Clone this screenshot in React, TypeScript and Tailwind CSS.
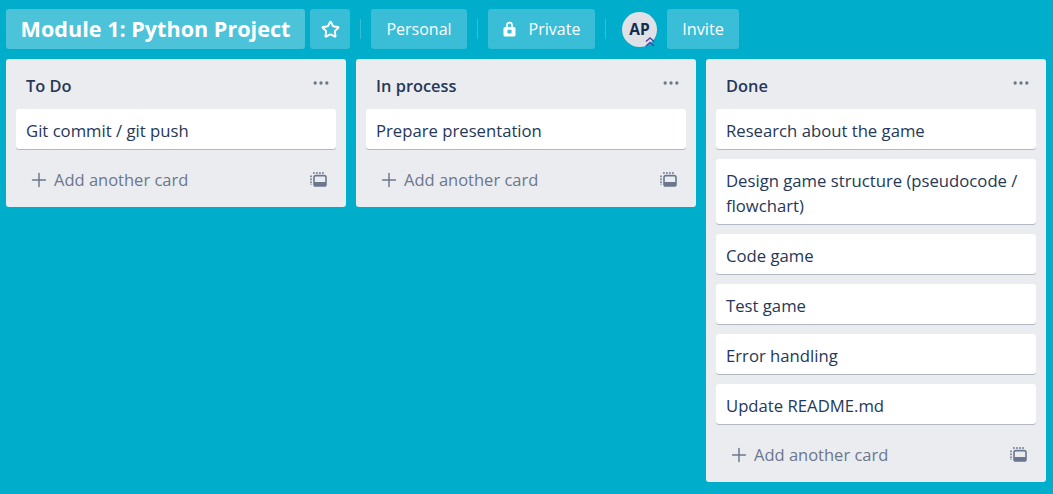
import { MoreHorizontal, Plus, Star } from 'lucide-react';

const lists = [
  { title: 'To Do', cards: ['Git commit / git push'] },
  { title: 'In process', cards: ['Prepare presentation'] },
  {
    title: 'Done',
    cards: [
      'Research about the game',
      'Design game structure (pseudocode / flowchart)',
      'Code game',
      'Test game',
      'Error handling',
      'Update README.md',
    ],
  },
];

function Divider() {
  return <div className="w-px h-[20px] mx-[10px] bg-white/20" />;
}

function TemplateIcon() {
  return (
    <svg width="17" height="16" viewBox="0 0 17 16" fill="none" className="text-[#6b778c]">
      <rect x="4" y="3.6" width="12" height="10.4" rx="1.8" stroke="currentColor" strokeWidth="1.6" />
      <rect x="4" y="10" width="12" height="4" rx="1" fill="currentColor" />
      <path d="M1 3.5v9.5" stroke="currentColor" strokeWidth="1.6" strokeDasharray="1.8 1.2" />
      <path d="M3 1h11" stroke="currentColor" strokeWidth="1.5" strokeDasharray="1.8 1.2" />
    </svg>
  );
}

function LockIcon() {
  return (
    <svg width="13" height="16" viewBox="0 0 13 16" fill="none">
      <path d="M4 6.5V4.2a2.5 2.5 0 0 1 5 0v2.3" stroke="white" strokeWidth="1.7" />
      <rect x="0.5" y="6" width="12" height="9.5" rx="1.5" fill="white" />
      <rect x="4.4" y="8.7" width="4.2" height="3.8" rx="0.8" fill="#3fbed8" />
    </svg>
  );
}

function ListColumn({ title, cards }: { title: string; cards: string[] }) {
  return (
    <div className="w-[340px] rounded-[3px] bg-[#ebecf0] px-[10px] self-start shrink-0">
      <div className="h-[50px] flex items-center justify-between pl-[10px] pr-[5px] pt-[4px]">
        <span className="text-[16.4px] font-semibold text-[#253858]">{title}</span>
        <MoreHorizontal size={20} className="text-[#6b778c] -mt-[6px]" />
      </div>
      <div className="flex flex-col gap-[10px]">
        {cards.map((card) => (
          <div
            key={card}
            className="bg-white rounded-[3px] px-[10px] pt-[9px] pb-[6px] text-[16.7px] leading-[25px] text-[#253858] shadow-[0_1px_0_#091e4240]"
          >
            {card}
          </div>
        ))}
      </div>
      <div className="h-[58px] pt-[4px] flex items-center justify-between pl-[12px] pr-[9px] text-[#6b778c]">
        <span className="flex items-center gap-[4px] text-[16.5px]">
          <Plus size={22} strokeWidth={1.6} />
          Add another card
        </span>
        <TemplateIcon />
      </div>
    </div>
  );
}

export default function App() {
  return (
    <div className="w-[1053px] h-[494px] overflow-hidden bg-[#00aecc] flex flex-col font-['Open_Sans',sans-serif]">
      {/* Board header */}
      <header className="h-[59px] shrink-0 pl-[6px] pt-[9px] flex items-start">
        <div className="h-[40px] w-[299px] rounded-[3px] bg-[#4dc3da] flex items-center justify-center text-[21.6px] font-bold text-white">
          Module 1: Python Project
        </div>
        <button className="h-[40px] w-[40px] ml-[5px] rounded-[3px] bg-[#3abdd7] flex items-center justify-center">
          <Star size={19} color="white" strokeWidth={2.4} />
        </button>
        <div className="h-[40px] flex items-center"><Divider /></div>
        <button className="h-[40px] w-[96px] rounded-[3px] bg-[#3abdd7] text-white text-[16px]">Personal</button>
        <div className="h-[40px] flex items-center"><Divider /></div>
        <button className="h-[40px] w-[107px] rounded-[3px] bg-[#3abdd7] text-white text-[16px] flex items-center justify-center gap-[13px]">
          <LockIcon />
          Private
        </button>
        <div className="h-[40px] flex items-center"><Divider /></div>
        <div className="relative ml-[6px] mt-[3px] w-[35px] h-[35px] rounded-full bg-[#dfe1e6] flex items-center justify-center text-[15.5px] font-bold text-[#172b4d]">
          AP
          <svg width="12" height="12" viewBox="0 0 12 12" fill="none" className="absolute right-[1px] bottom-[-1px]" stroke="#5243aa" strokeWidth="1.4">
            <path d="M2 5.5 6 2l4 3.5M2 10 6 6.5l4 3.5" />
          </svg>
        </div>
        <button className="h-[40px] w-[72px] ml-[10px] rounded-[3px] bg-[#3abdd7] text-white text-[16.3px]">Invite</button>
      </header>

      {/* Lists */}
      <main className="flex gap-[10px] pl-[6px]">
        {lists.map((list) => (
          <ListColumn key={list.title} title={list.title} cards={list.cards} />
        ))}
      </main>
    </div>
  );
}
